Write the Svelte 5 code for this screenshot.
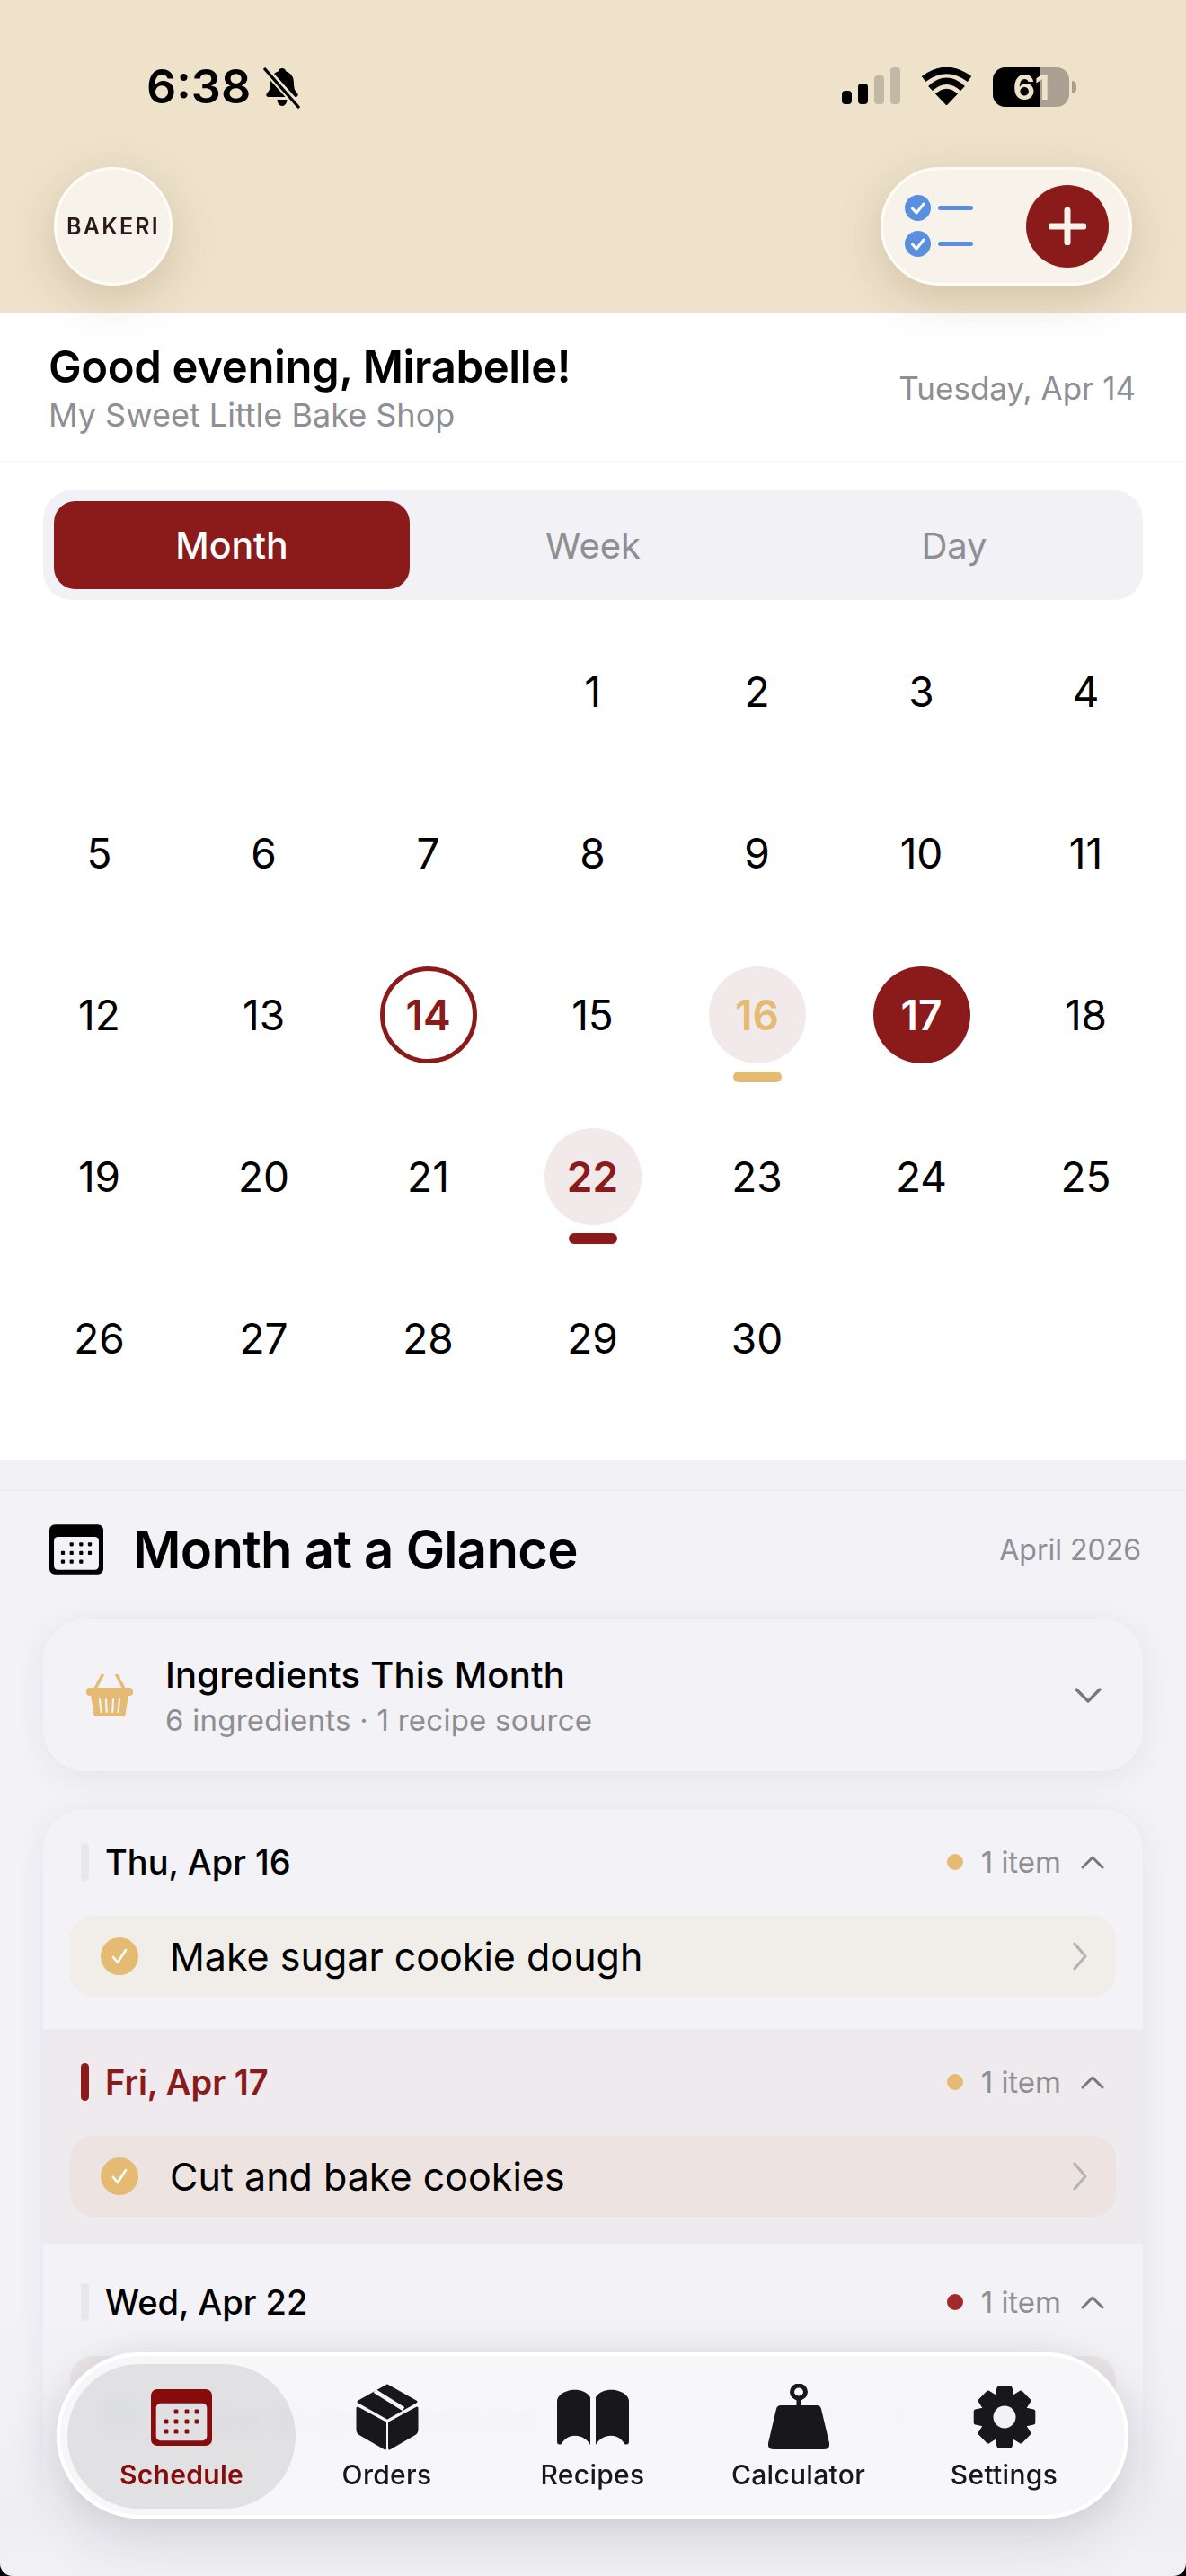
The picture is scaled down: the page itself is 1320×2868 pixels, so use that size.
<script>
  const blanks = [null, null, null];
  const days = [...blanks, ...Array.from({ length: 30 }, (_, i) => i + 1)];

  const marks = {
    14: { cls: "today" },
    16: { cls: "tint gold", bar: "gold" },
    17: { cls: "selected" },
    22: { cls: "tint red", bar: "red" },
  };

  const groups = [
    { date: "Thu, Apr 16", dot: "#e5ba73", task: "Make sugar cookie dough", cls: "plain" },
    { date: "Fri, Apr 17", dot: "#e5ba73", task: "Cut and bake cookies", cls: "current" },
  ];

  const tabs = ["Schedule", "Orders", "Recipes", "Calculator", "Settings"];

  function gearPath() {
    const cx = 36;
    const cy = 36;
    const pts = [];
    for (let i = 0; i < 8; i++) {
      const a = (i * Math.PI) / 4 - Math.PI / 2;
      const step = [
        [a - 0.39, 23.5],
        [a - 0.2, 33],
        [a + 0.2, 33],
        [a + 0.39, 23.5],
      ];
      for (const [t, r] of step) {
        pts.push(`${(cx + Math.cos(t) * r).toFixed(1)} ${(cy + Math.sin(t) * r).toFixed(1)}`);
      }
    }
    return `M${pts.join("L")}Z`;
  }
  const gear = gearPath();
</script>

{#snippet calendar(color, inner, w, h)}
  <svg width={w} height={h} viewBox="0 0 68 63">
    <rect width="68" height="63" rx="7" fill={color} />
    <rect x="5.7" y="15.7" width="56.6" height="41.6" rx="5" fill={inner} />
    {#each [[28, 25], [40, 25], [51, 25], [17, 36], [28, 36], [40, 36], [51, 36], [17, 47], [28, 47], [40, 47]] as [x, y]}
      <rect x={x - 2.4} y={y - 2.4} width="4.8" height="4.8" rx="1.2" fill={color} />
    {/each}
  </svg>
{/snippet}

{#snippet check()}
  <svg class="check" width="42" height="42" viewBox="0 0 42 42">
    <circle cx="21" cy="21" r="21" fill="#e5ba73" />
    <path d="M14 22l5 6 9-14" fill="none" stroke="#fff" stroke-width="2.6" stroke-linecap="round" stroke-linejoin="round" />
  </svg>
{/snippet}

{#snippet chevron(d, w, h, color, sw)}
  <svg width={w} height={h} viewBox={`0 0 ${w} ${h}`}>
    <path {d} fill="none" stroke={color} stroke-width={sw} stroke-linecap="round" stroke-linejoin="round" />
  </svg>
{/snippet}

<div class="page">
  <header class="top">
    <div class="status">
      <div class="clock">
        <span class="time">6:38</span>
        <svg width="42" height="46" viewBox="0 0 42 46">
          <path d="M21 1c2.400 0 4 1.700 4.300 3.600 6 1.800 8.700 6.600 8.700 13 0 6.300 1.600 9 4 11.500 1.300 1.400.6 3.900-1.600 3.900H5.600c-2.200 0-2.900-2.500-1.600-3.900 2.400-2.500 4-5.200 4-11.500 0-6.400 2.700-11.200 8.700-13C17 2.700 18.600 1 21 1z" fill="#000" />
          <path d="M15.500 36h11c-.3 4-2.500 7-5.500 7s-5.200-3-5.500-7z" fill="#000" />
          <path d="M3 3l36 40" stroke="#eee2cb" stroke-width="8" />
          <path d="M2 2l37 42" stroke="#000" stroke-width="3.400" stroke-linecap="round" />
        </svg>
      </div>
      <div class="sys">
        <div class="signal">
          <i class="on" style="height:15px"></i>
          <i class="on" style="height:23px"></i>
          <i style="height:32px"></i>
          <i style="height:41px"></i>
        </div>
        <svg width="57" height="42" viewBox="0 0 57 42">
          <path d="M28.500 42L16.500 29.500Q28.500 19 40.500 29.500Z" fill="#000" stroke="#000" stroke-width="1" stroke-linejoin="round" />
          <path d="M10.500 23.500Q28.500 7 46.500 23.500" fill="none" stroke="#000" stroke-width="7" />
          <path d="M3 13Q28.500 -6 54 13" fill="none" stroke="#000" stroke-width="7.500" />
        </svg>
        <div class="battery-wrap">
          <div class="battery"><span class="level"></span><span class="pct">61</span></div>
          <span class="nub"></span>
        </div>
      </div>
    </div>
    <div class="actions">
      <div class="logo">BAKERI</div>
      <div class="pill">
        <svg width="78" height="70" viewBox="0 0 78 70">
          {#each [0, 40] as y}
            <circle cx="14.500" cy={14.500 + y} r="14.500" fill="#5a8fe0" />
            <path d={`M8.500 ${15 + y}l4.500 5 8-10`} fill="none" stroke="#fff" stroke-width="3" stroke-linecap="round" stroke-linejoin="round" />
            <rect x="37" y={12 + y} width="39" height="5" rx="2.500" fill="#5a8fe0" />
          {/each}
        </svg>
        <div class="plus">
          <svg width="42" height="42" viewBox="0 0 42 42">
            <path d="M21 3v36M3 21h36" stroke="#f7f3ea" stroke-width="7" stroke-linecap="round" />
          </svg>
        </div>
      </div>
    </div>
  </header>

  <section class="hello">
    <div>
      <h1>Good evening, Mirabelle!</h1>
      <p>My Sweet Little Bake Shop</p>
    </div>
    <span class="today-label">Tuesday, Apr 14</span>
  </section>

  <div class="segment">
    <span class="seg active">Month</span>
    <span class="seg">Week</span>
    <span class="seg">Day</span>
  </div>

  <div class="grid">
    {#each days as d}
      <div class="cell">
        {#if d}
          <span class={`num ${marks[d]?.cls ?? ""}`}>{d}</span>
          {#if marks[d]?.bar}<span class={`bar ${marks[d].bar}`}></span>{/if}
        {/if}
      </div>
    {/each}
  </div>

  <section class="glance">
    <div class="glance-inner">
      <div class="glance-head">
        {@render calendar("#000", "#f2f2f7", 60, 56)}
        <h2>Month at a Glance</h2>
        <span class="month">April 2026</span>
      </div>

      <div class="ingredients">
        <svg width="52" height="47" viewBox="0 0 52 47">
          <path d="M18 1L10 16M34 1L42 16" stroke="#e5ba73" stroke-width="3.500" stroke-linecap="round" />
          <rect y="15" width="52" height="9" rx="4" fill="#e5ba73" />
          <path d="M5 23H47L43.500 45Q43.200 47 41 47H11Q8.800 47 8.500 45Z" fill="#e5ba73" />
          <path d="M15 28l1.500 14M22 28l.700 14M30 28l-.700 14M37 28l-1.500 14" stroke="#f2f2f7" stroke-width="2.200" stroke-linecap="round" />
        </svg>
        <div class="ing-text">
          <strong>Ingredients This Month</strong>
          <span>6 ingredients · 1 recipe source</span>
        </div>
        {@render chevron("M2 2l13 13L28 2", 30, 17, "#77777d", 3.4)}
      </div>

      <div class="schedule">
        {#each groups as g}
          <div class={`group ${g.cls}`}>
            <div class="group-head">
              <i class="tick"></i>
              <span class="date">{g.date}</span>
              <i class="dot" style={`background:${g.dot}`}></i>
              <span class="count">1 item</span>
              {@render chevron("M2 13L13 2l11 11", 26, 15, "#77777d", 3)}
            </div>
            <div class="task">
              {@render check()}
              <span class="task-name">{g.task}</span>
              {@render chevron("M2 2l12 14L2 30", 16, 32, "#b5b3b2", 3)}
            </div>
          </div>
        {/each}

        <div class="group last">
          <div class="group-head">
            <i class="tick"></i>
            <span class="date">Wed, Apr 22</span>
            <i class="dot" style="background:#a32a2a"></i>
            <span class="count">1 item</span>
            {@render chevron("M2 13L13 2l11 11", 26, 15, "#77777d", 3)}
          </div>
          <div class="task tall">
            <svg class="check" width="42" height="42" viewBox="0 0 42 42"><circle cx="21" cy="21" r="21" fill="#5a8fe0" /></svg>
            <span class="task-name">Bake Sugar Cookies</span>
            <span class="confirm">Confirm</span>
          </div>
        </div>
      </div>
    </div>
  </section>

  <div class="fade"></div>

  <nav class="tabbar">
    {#each tabs as t, i}
      <div class={`tab ${i === 0 ? "active" : ""}`}>
        <div class="tab-icon">
          {#if i === 0}
            {@render calendar("#870c0c", "#e0e0e2", 68, 63)}
          {:else if i === 1}
            <svg width="70" height="74" viewBox="0 0 70 74">
              <g fill="#18181a" stroke="#18181a" stroke-width="3" stroke-linejoin="round">
                <path d="M35 2L67 20 35 38 3 20Z" />
                <path d="M2 27L32.500 43.500V72L5 56Q2 54.500 2 51Z" />
                <path d="M68 27L37.500 43.500V72L65 56Q68 54.500 68 51Z" />
              </g>
              <path d="M21 8L53 28" stroke="#f6f6f8" stroke-width="4.500" />
            </svg>
          {:else if i === 2}
            <svg width="80" height="62" viewBox="0 0 80 62">
              <path d="M0 14Q0 9 4 6C12 -1 30 -2 37 9V62C31 50 12 47 5 61Q0 63 0 58Z" fill="#18181a" />
              <path d="M80 14Q80 9 76 6C68 -1 50 -2 43 9V62C49 50 68 47 75 61Q80 63 80 58Z" fill="#18181a" />
            </svg>
          {:else if i === 3}
            <svg width="68" height="74" viewBox="0 0 68 74">
              <ellipse cx="34" cy="9" rx="7.500" ry="7" fill="none" stroke="#18181a" stroke-width="5" />
              <rect x="31.500" y="14" width="5" height="10" fill="#18181a" />
              <path d="M14 24H54Q58 24 59 28L68 66Q69 73 62 73H6Q-1 73 0 66L9 28Q10 24 14 24Z" fill="#18181a" />
            </svg>
          {:else}
            <svg width="72" height="72" viewBox="0 0 72 72">
              <path d={gear} fill="#18181a" stroke="#18181a" stroke-width="4" stroke-linejoin="round" />
              <ellipse cx="36" cy="36" rx="12.500" ry="12.500" fill="#f1f1f6" />
            </svg>
          {/if}
        </div>
        <span class="tab-label">{t}</span>
      </div>
    {/each}
  </nav>

  <div class="screen-edge"></div>
</div>

<style>
  :global(body) {
    margin: 0;
    background: #fff;
  }

  .page {
    position: relative;
    width: 1320px;
    height: 2868px;
    overflow: hidden;
    background: #fff;
    color: #000;
    font-family: Inter, "Liberation Sans", sans-serif;
  }

  /* header */
  .top {
    position: relative;
    z-index: 1;
    box-sizing: border-box;
    height: 348px;
    padding: 72px 60px 0;
    background: #eee2cb;
  }

  .status {
    display: flex;
    justify-content: space-between;
    height: 114px;
  }

  .clock {
    display: flex;
    align-items: flex-start;
    gap: 14px;
    padding-left: 103px;
  }

  .time {
    font-size: 52px;
    line-height: 50px;
    font-weight: 600;
  }

  .clock svg {
    margin-top: 3px;
  }

  .sys {
    display: flex;
    align-items: flex-start;
    gap: 23px;
    margin-right: 62px;
    padding-top: 3px;
  }

  .signal {
    display: flex;
    align-items: flex-end;
    gap: 7px;
    height: 41px;
  }

  .signal i {
    width: 11px;
    border-radius: 4px;
    background: #c2b8a6;
  }

  .signal i.on {
    background: #000;
  }

  .battery-wrap {
    display: flex;
    align-items: center;
    gap: 3px;
  }

  .battery {
    position: relative;
    width: 85px;
    height: 44px;
    border-radius: 14px;
    overflow: hidden;
    background: #a9a091;
    text-align: center;
  }

  .level {
    position: absolute;
    left: 0;
    top: 0;
    bottom: 0;
    width: 52px;
    background: #000;
  }

  .pct {
    position: relative;
    font-size: 38px;
    line-height: 44px;
    font-weight: 700;
    letter-spacing: -0.5px;
    color: #eee2cb;
  }

  .nub {
    width: 5px;
    height: 14px;
    border-radius: 0 6px 6px 0;
    background: #a9a091;
  }

  .actions {
    display: flex;
    justify-content: space-between;
    align-items: flex-start;
  }

  .logo {
    box-sizing: border-box;
    width: 132px;
    height: 132px;
    border-radius: 50%;
    border: 3px solid #fffdf8;
    background: #f7f3ea;
    display: flex;
    align-items: center;
    justify-content: center;
    font-size: 25px;
    font-weight: 600;
    letter-spacing: 2.2px;
    color: #2b1a18;
    box-shadow: 0 14px 50px rgba(110, 80, 40, 0.22);
  }

  .pill {
    box-sizing: border-box;
    width: 280px;
    height: 132px;
    border-radius: 66px;
    border: 3px solid #fffdf8;
    background: #f7f3ea;
    display: flex;
    align-items: center;
    justify-content: space-between;
    padding: 0 23px 0 24px;
    box-shadow: 0 14px 50px rgba(110, 80, 40, 0.22);
  }

  .plus {
    width: 92px;
    height: 92px;
    border-radius: 50%;
    background: #8b1a1a;
    display: flex;
    align-items: center;
    justify-content: center;
  }

  /* greeting */
  .hello {
    box-sizing: border-box;
    height: 167px;
    padding: 32px 56px 0 54px;
    display: flex;
    justify-content: space-between;
    border-bottom: 2px solid #f8f8f8;
  }

  h1 {
    margin: 0;
    font-size: 49px;
    line-height: 58px;
    font-weight: 600;
    letter-spacing: -0.35px;
  }

  .hello p {
    margin: 2px 0 0;
    font-size: 36px;
    line-height: 44px;
    color: #8e8e93;
  }

  .today-label {
    margin-top: 30px;
    font-size: 35px;
    line-height: 44px;
    color: #8e8e93;
  }

  /* month / week / day */
  .segment {
    box-sizing: border-box;
    width: 1224px;
    height: 122px;
    margin: 31px 0 0 48px;
    padding: 12px;
    display: grid;
    grid-template-columns: repeat(3, 396px);
    gap: 6px;
    border-radius: 32px;
    background: #f1f1f6;
  }

  .seg {
    display: flex;
    align-items: center;
    justify-content: center;
    font-size: 40px;
    color: #8e8e93;
  }

  .seg.active {
    border-radius: 24px;
    background: #8b1a1a;
    color: #fff;
    font-size: 41px;
    font-weight: 500;
  }

  /* calendar */
  .grid {
    display: grid;
    grid-template-columns: repeat(7, 183px);
    grid-auto-rows: 180px;
    margin: 12px 0 0 19px;
  }

  .cell {
    display: flex;
    flex-direction: column;
    align-items: center;
    padding-top: 36px;
    box-sizing: border-box;
  }

  .num {
    box-sizing: border-box;
    width: 108px;
    height: 108px;
    border-radius: 50%;
    display: flex;
    align-items: center;
    justify-content: center;
    font-size: 46px;
  }

  .today {
    border: 5px solid #8b1a1a;
    color: #8b1a1a;
    font-weight: 600;
  }

  .selected {
    background: #8b1a1a;
    color: #fff;
    font-weight: 600;
  }

  .tint {
    background: #f2eaea;
    font-weight: 600;
  }

  .tint.gold {
    color: #e5ba73;
  }

  .tint.red {
    color: #8b1a1a;
  }

  .bar {
    width: 54px;
    height: 12px;
    margin-top: 9px;
    border-radius: 6px;
  }

  .bar.gold {
    background: #e5ba73;
  }

  .bar.red {
    background: #8b1a1a;
  }

  /* month at a glance */
  .glance {
    margin-top: 46px;
    padding-top: 32px;
    height: 1242px;
    background: #f1f1f6;
  }

  .glance-inner {
    box-sizing: border-box;
    height: 100%;
    padding: 35px 48px 0;
    border-top: 2px solid #ececf1;
    background: #f2f2f7;
  }

  .glance-head {
    display: flex;
    align-items: center;
    height: 60px;
    padding-left: 7px;
  }

  h2 {
    flex: 1;
    margin: 0 0 0 33px;
    font-size: 58px;
    line-height: 60px;
    font-weight: 600;
    letter-spacing: -0.7px;
  }

  .month {
    font-size: 32px;
    color: #8e8e93;
    margin-right: 2px;
  }

  .ingredients {
    box-sizing: border-box;
    display: flex;
    align-items: center;
    height: 169px;
    margin-top: 48px;
    padding: 0 46px 0 48px;
    border-radius: 46px;
    background: #f2f2f7;
    box-shadow: 0 6px 34px rgba(40, 40, 70, 0.07);
  }

  .ing-text {
    flex: 1;
    display: flex;
    flex-direction: column;
    gap: 4px;
    margin-left: 36px;
  }

  .ing-text strong {
    font-size: 40px;
    line-height: 50px;
    font-weight: 500;
    letter-spacing: 0.2px;
  }

  .ing-text span {
    font-size: 33px;
    line-height: 42px;
    letter-spacing: 0.25px;
    color: #8e8e93;
  }

  .schedule {
    margin-top: 42px;
    height: 900px;
    border-radius: 46px 46px 0 0;
    overflow: hidden;
    background: #f2f2f7;
    box-shadow: 0 6px 34px rgba(40, 40, 70, 0.07);
  }

  .group {
    padding: 38px 30px 36px;
  }

  .group.current {
    padding-bottom: 30px;
    background: #eeeaee;
  }

  .group.last {
    padding-top: 44px;
  }

  .group-head {
    display: flex;
    align-items: center;
    height: 42px;
    padding: 0 13px 0 12px;
  }

  .tick {
    width: 9px;
    height: 42px;
    border-radius: 5px;
    background: #e6e6eb;
  }

  .date {
    flex: 1;
    margin-left: 18px;
    font-size: 38px;
    font-weight: 500;
  }

  .current .tick {
    background: #8b1a1a;
  }

  .current .date {
    color: #8b1a1a;
    font-weight: 600;
  }

  .dot {
    width: 18px;
    height: 18px;
    border-radius: 50%;
  }

  .count {
    margin: 0 22px 0 20px;
    font-size: 33px;
    color: #8e8e93;
  }

  .task {
    display: flex;
    align-items: center;
    height: 90px;
    margin-top: 39px;
    padding: 0 32px 0 34px;
    border-radius: 26px;
    background: #f1eeea;
  }

  .current .task {
    background: #ede4e2;
  }

  .task.tall {
    height: 300px;
    align-items: flex-start;
    padding-top: 46px;
    box-sizing: border-box;
    background: #ece4e6;
  }

  .task-name {
    flex: 1;
    margin-left: 35px;
    font-size: 43px;
    line-height: 50px;
  }

  .confirm {
    margin-right: 130px;
    font-size: 43px;
    font-weight: 600;
    color: #5a8fe0;
  }

  .check {
    flex: none;
  }

  /* fade under the floating tabs */
  .fade {
    position: absolute;
    left: 0;
    right: 0;
    top: 2570px;
    bottom: 0;
    background: linear-gradient(
      rgba(241, 241, 246, 0),
      rgba(236, 236, 241, 0.3) 40%,
      rgba(238, 238, 243, 0.97) 78%,
      #f0f0f5
    );
  }

  .tabbar {
    position: absolute;
    left: 63px;
    top: 2619px;
    box-sizing: border-box;
    width: 1193px;
    height: 185px;
    padding: 9px 0 0 20px;
    display: grid;
    grid-template-columns: repeat(5, 229px);
    border: 4px solid #fff;
    border-radius: 93px;
    background: rgba(247, 247, 249, 0.97);
    backdrop-filter: blur(5px);
    box-shadow: 0 22px 60px rgba(30, 30, 50, 0.12), 0 0 50px rgba(30, 30, 50, 0.06);
  }

  .tab {
    height: 161px;
    display: flex;
    flex-direction: column;
    align-items: center;
    border-radius: 80px;
  }

  .tab.active {
    margin: 0 -13px 0 -12px;
    background: rgba(0, 0, 0, 0.09);
  }

  .tab-icon {
    height: 78px;
    margin-top: 20px;
    display: flex;
    align-items: center;
    justify-content: center;
  }

  .tab-label {
    margin-top: 7px;
    font-size: 30px;
    line-height: 36px;
    font-weight: 500;
    letter-spacing: 0.3px;
    color: #18181a;
  }

  .active .tab-label {
    color: #870c0c;
    font-weight: 600;
  }

  .screen-edge {
    position: absolute;
    inset: 0;
    border-radius: 14px;
    box-shadow: 0 0 0 20px #000;
    pointer-events: none;
  }
</style>
